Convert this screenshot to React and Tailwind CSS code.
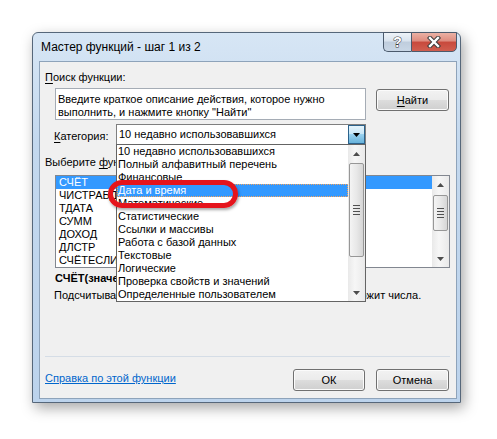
import React from "react";

const categories = [
  "10 недавно использовавшихся",
  "Полный алфавитный перечень",
  "Финансовые",
  "Дата и время",
  "Математические",
  "Статистические",
  "Ссылки и массивы",
  "Работа с базой данных",
  "Текстовые",
  "Логические",
  "Проверка свойств и значений",
  "Определенные пользователем",
];

const functions = ["СЧЁТ", "ЧИСТРАБДНИ", "ТДАТА", "СУММ", "ДОХОД", "ДЛСТР", "СЧЁТЕСЛИМН"];

const btn =
  "h-[22px] rounded-[3px] border border-[#707070] bg-[linear-gradient(#f2f2f2,#ebebeb_50%,#dddddd_50%,#cfcfcf)] shadow-[inset_0_0_0_1px_#fbfbfb] text-center leading-[20px]";

const Arrow = ({ up }) => (
  <svg width="7" height="4" viewBox="0 0 7 4">
    <path d={up ? "M0 4 L3.5 0 L7 4 Z" : "M0 0 L7 0 L3.5 4 Z"} fill="#4d4d4d" />
  </svg>
);

// windows 7 style vertical scrollbar
const ScrollBar = ({ offset, thumb }) => (
  <div className="w-[17px] flex flex-col bg-[linear-gradient(90deg,#e9e9e9,#f6f6f6_40%,#f2f2f2_60%,#e9e9e9)]">
    <div className="h-[17px] flex items-center justify-center">
      <Arrow up />
    </div>
    <div className="flex-1 flex flex-col items-center">
      <div style={{ height: offset }} />
      <div
        style={{ height: thumb }}
        className="w-[15px] rounded-[2px] border border-[#979797] bg-[linear-gradient(90deg,#f4f4f4,#e8e8e8_50%,#d6d6d6)] flex flex-col items-center justify-center gap-[2px]"
      >
        <div className="w-[7px] h-px bg-[#505050]" />
        <div className="w-[7px] h-px bg-[#505050]" />
        <div className="w-[7px] h-px bg-[#505050]" />
        <div className="w-[7px] h-px bg-[#505050]" />
      </div>
    </div>
    <div className="h-[17px] flex items-center justify-center">
      <Arrow />
    </div>
  </div>
);

const TitleBar = () => (
  <div className="h-[28px] flex items-start justify-between">
    <div className="pl-[8px] pt-[6px] text-[12px] leading-[16px]">Мастер функций - шаг 1 из 2</div>
    <div className="flex -mt-px mr-[3px]">
      <div className="w-[28px] h-[20px] rounded-bl-[5px] border border-[#4b5a6c] border-r-0 bg-[linear-gradient(#eef3f8,#d9e3ee_45%,#bfcddd_50%,#c9d7e6)] flex items-center justify-center">
        <span className="text-[14px] font-bold leading-[14px] text-white [-webkit-text-stroke:1px_#3b3b3b] [paint-order:stroke_fill]">
          ?
        </span>
      </div>
      <div className="w-[46px] h-[20px] rounded-br-[5px] border border-[#4b5a6c] bg-[linear-gradient(#ebb1a4,#de8b7e_45%,#c8493c_50%,#d05e4f)] flex items-center justify-center">
        <svg width="14" height="12" viewBox="0 0 14 12">
          <path d="M3 2 L11 10 M11 2 L3 10" stroke="#3a3a3a" strokeWidth="4.4" strokeLinecap="square" />
          <path d="M3 2 L11 10 M11 2 L3 10" stroke="#ffffff" strokeWidth="2.4" strokeLinecap="square" />
        </svg>
      </div>
    </div>
  </div>
);

export default function App() {
  return (
    <div className="w-[497px] h-[439px] bg-white overflow-hidden pl-[32px] pt-[32px] font-['Liberation_Sans',Arial,sans-serif] text-[11px] leading-[13px] text-black">
      <div className="w-[429px] h-[371px] rounded-t-[6px] border border-[#56677a] bg-[linear-gradient(#d7e6f5,#c3d8ee_30%,#bcd3ec)] shadow-[3px_5px_14px_rgba(0,0,0,0.35)] flex flex-col">
        <TitleBar />
        <div className="ml-[6px] w-[418px] h-[338px] border border-[#8ea3ba] bg-[#f0f0f0] relative flex flex-col">
          <div className="ml-[5px] mt-[8px] leading-[14px]">
            <span className="underline underline-offset-[2px]">П</span>оиск функции:
          </div>

          <div className="mt-[4px] flex items-start">
            <div className="ml-[15px] w-[311px] h-[32px] border border-[#a5acb5] bg-white pl-[2px] pt-[4px] leading-[13px]">
              <div>Введите краткое описание действия, которое нужно</div>
              <div>выполнить, и нажмите кнопку "Найти"</div>
            </div>
            <button className={`${btn} ml-[10px] mt-px w-[73px]`}>
              <span className="underline underline-offset-[2px]">Н</span>айти
            </button>
          </div>

          <div className="mt-[4px] flex items-start h-[21px]">
            <div className="ml-[14px] w-[62px] pt-[5px] leading-[14px]">
              <span className="underline underline-offset-[2px]">К</span>атегория:
            </div>
            <div className="relative w-[250px] h-[21px] border border-[#7f7f7f] bg-white flex">
              <div className="flex-1 pl-[2px] leading-[19px] whitespace-nowrap">10 недавно использовавшихся</div>
              <div className="w-[17px] h-[19px] border border-[#2c628b] bg-[linear-gradient(#e5f4fc,#c4e5f6_50%,#98d1ef_50%,#68b3db)] flex items-center justify-center">
                <svg width="7" height="4" viewBox="0 0 7 4">
                  <path d="M0 0 L7 0 L3.5 4 Z" fill="#000" />
                </svg>
              </div>

              {/* open dropdown list */}
              <div className="absolute left-[-1px] top-full w-[250px] border border-[#646464] bg-white flex z-10">
                <div className="w-[231px]">
                  {categories.map((c) => (
                    <div
                      key={c}
                      className={
                        c === "Дата и время"
                          ? "h-[13px] leading-[13px] pl-px whitespace-nowrap bg-[#3399ff] text-white outline-1 outline-dotted outline-[#f5a35c] -outline-offset-1"
                          : "h-[13px] leading-[13px] pl-px whitespace-nowrap"
                      }
                    >
                      {c}
                    </div>
                  ))}
                </div>
                <ScrollBar offset={1} thumb={94} />
              </div>
            </div>
          </div>

          <div className="ml-[5px] mt-[10px] leading-[14px]">
            Выберите <span className="underline underline-offset-[2px]">ф</span>ункцию:
          </div>

          <div className="ml-[15px] mt-[6px] w-[395px] h-[93px] border border-[#828790] bg-white flex">
            <div className="flex-1">
              {functions.map((f, i) => (
                <div
                  key={f}
                  className={
                    i === 0
                      ? "h-[13px] leading-[13px] pl-[3px] bg-[#3399ff] text-white"
                      : "h-[13px] leading-[13px] pl-[3px]"
                  }
                >
                  {f}
                </div>
              ))}
            </div>
            <ScrollBar offset={2} thumb={36} />
          </div>

          <div className="ml-[15px] mt-[3px] leading-[14px] font-bold whitespace-nowrap">СЧЁТ(значение1;значение2;...)</div>
          <div className="ml-[14px] mt-[3px] leading-[14px] whitespace-nowrap">
            Подсчитывает количество ячеек в диапазоне, который содержит числа.
          </div>

          <div className="ml-[5px] mt-[54px] w-[405px] h-px bg-[#d5dde6]" />

          <div className="mt-[12px] flex items-start">
            <a className="ml-[5px] mt-[2px] leading-[14px] text-[#0066cc] underline underline-offset-[1px]" href="#">
              Справка по этой функции
            </a>
            <div className="ml-auto mr-[7px] flex gap-[11px]">
              <button className={`${btn} w-[72px] border-[#3c7fb1] shadow-[inset_0_0_0_1px_#8fd6f5]`}>ОК</button>
              <button className={`${btn} w-[73px]`}>Отмена</button>
            </div>
          </div>

          {/* red highlight around the chosen category */}
          <div className="absolute left-[68px] top-[118px] w-[130px] h-[28px] rounded-full border-[5px] border-[#e5141c] shadow-[1px_2px_3px_rgba(0,0,0,0.35)] z-20 pointer-events-none" />
        </div>
      </div>
    </div>
  );
}
